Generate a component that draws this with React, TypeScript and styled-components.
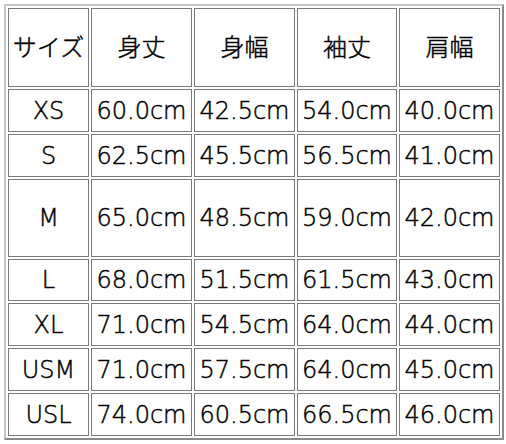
import React from "react";
import styled, { createGlobalStyle } from "styled-components";

const Global = createGlobalStyle`
  html, body { margin: 0; padding: 0; background: #ffffff; }
  body { font-family: "DejaVu Sans", "Noto Sans CJK JP", sans-serif; }
`;

const Page = styled.div`
  padding: 4px 0 0 4px;
`;

const SizeTable = styled.table`
  border-collapse: separate;
  border-spacing: 2px;
  border-style: solid;
  border-width: 2px;
  border-color: #c4c4c4 #8a8a8a #8a8a8a #c4c4c4;
  table-layout: fixed;
  font-family: "DejaVu Sans", "Noto Sans CJK JP", sans-serif;
  font-weight: 200;
  font-size: 24px;
  color: #000;
  -webkit-text-stroke: 0.45px #000;
`;

const Cell = styled.td<{ $w?: number; $h?: number }>`
  border: 1px solid #7a7a7a;
  padding: 0;
  box-sizing: border-box;
  text-align: center;
  vertical-align: middle;
  white-space: nowrap;
  overflow: visible;
  ${(p) => (p.$w ? `width: ${p.$w}px;` : "")}
  ${(p) => (p.$h ? `height: ${p.$h}px;` : "")}
  line-height: 1;
`;

const widths = [81, 101, 101, 100, 101];
const headers = ["サイズ", "身丈", "身幅", "袖丈", "肩幅"];

const rows: { size: string; h: number; v: string[] }[] = [
  { size: "XS", h: 43, v: ["60.0cm", "42.5cm", "54.0cm", "40.0cm"] },
  { size: "S", h: 43, v: ["62.5cm", "45.5cm", "56.5cm", "41.0cm"] },
  { size: "M", h: 78, v: ["65.0cm", "48.5cm", "59.0cm", "42.0cm"] },
  { size: "L", h: 42, v: ["68.0cm", "51.5cm", "61.5cm", "43.0cm"] },
  { size: "XL", h: 43, v: ["71.0cm", "54.5cm", "64.0cm", "44.0cm"] },
  { size: "USM", h: 43, v: ["71.0cm", "57.5cm", "64.0cm", "45.0cm"] },
  { size: "USL", h: 43, v: ["74.0cm", "60.5cm", "66.5cm", "46.0cm"] },
];

export default function App() {
  return (
    <Page>
      <Global />
      <SizeTable>
        <tbody>
          <tr>
            {headers.map((h, i) => (
              <Cell key={h} $w={widths[i]} $h={79}>
                {h}
              </Cell>
            ))}
          </tr>
          {rows.map((r) => (
            <tr key={r.size}>
              <Cell $h={r.h}>{r.size}</Cell>
              {r.v.map((v, i) => (
                <Cell key={i}>{v}</Cell>
              ))}
            </tr>
          ))}
        </tbody>
      </SizeTable>
    </Page>
  );
}
